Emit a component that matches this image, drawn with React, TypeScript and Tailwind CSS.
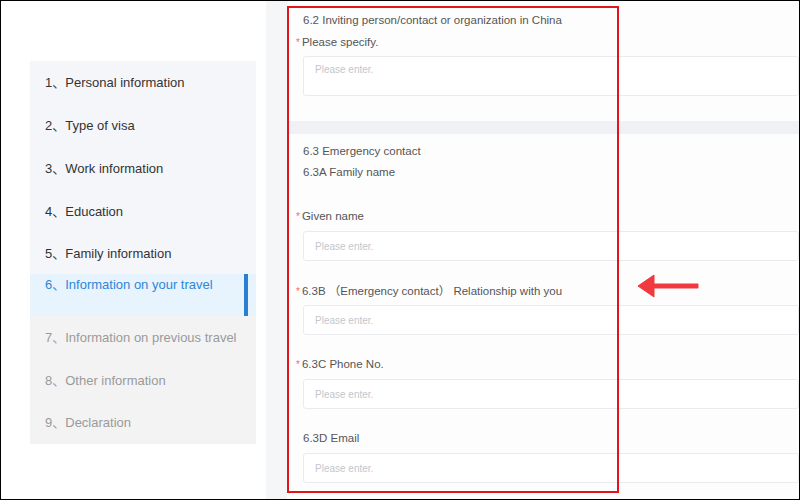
import React from "react"

const font = { fontFamily: '"Liberation Sans", "Noto Sans CJK SC", sans-serif' }

const steps = [
    { label: "Personal information", state: "done", h: "h-[43px]" },
    { label: "Type of visa", state: "done", h: "h-[43px]" },
    { label: "Work information", state: "done", h: "h-[43px]" },
    { label: "Education", state: "done", h: "h-[43px]" },
    { label: "Family information", state: "done", h: "h-[41px]" },
    { label: "Information on your travel", state: "active", h: "h-[42px]" },
    { label: "Information on previous travel", state: "todo", h: "h-[43px]" },
    { label: "Other information", state: "todo", h: "h-[43px]" },
    { label: "Declaration", state: "todo", h: "h-[42px]" },
]

const Label = ({ text, required, className = "" }: { text: string; required?: boolean; className?: string }) => (
    <div className={`h-[18px] leading-[18px] text-[11.5px] text-[#555] whitespace-nowrap ${className}`}>
        {required && <span className="-ml-[7px] mr-[2px] text-[#f56c6c] text-[10px]">*</span>}
        {text}
    </div>
)

const Input = ({ className = "" }: { className?: string }) => (
    <div className={`h-[30px] w-full rounded-[3px] border border-[#e9ebef] bg-white pl-[11px] flex items-center text-[10px] text-[#c3c6cd] ${className}`}>
        Please enter.
    </div>
)

export default function App() {
    return (
        <div className="relative w-[800px] h-[500px] border border-black overflow-hidden flex bg-white" style={font}>
            {/* left column with steps */}
            <div className="w-[265px] shrink-0 bg-white pt-[60px] pl-[29px]">
                <div className="w-[226px] bg-[#f5f6f9] flex flex-col text-[13px]">
                    {steps.map((s, i) => {
                        if (s.state === "active") {
                            return (
                                <div key={s.label} className={`${s.h} flex bg-[#e7f3fd]`}>
                                    <div className="flex-1 pl-[15px] pt-[1px] leading-[20px] text-[#2f86d6]">
                                        {i + 1}、{s.label}
                                    </div>
                                    <div className="w-[4px] mr-[8px] bg-[#2b7fd2]" />
                                </div>
                            )
                        }
                        return (
                            <div
                                key={s.label}
                                className={`${s.h} flex items-center pl-[15px] ${
                                    s.state === "done" ? "text-[#333]" : "text-[#9a9a9a] bg-[#f3f3f4]"
                                }`}
                            >
                                {i + 1}、{s.label}
                            </div>
                        )
                    })}
                </div>
            </div>

            {/* gutter */}
            <div className="w-[21px] shrink-0 bg-[#f5f6f8]" />

            {/* form */}
            <div className="flex-1 flex flex-col bg-[#fdfdfe]">
                <div className="h-[120px] pl-[16px] pt-[10px]">
                    <Label text="6.2 Inviting person/contact or organization in China" />
                    <Label text="Please specify." required className="mt-[4px]" />
                    <div className="mt-[5px] h-[40px] w-full rounded-[3px] border border-[#e9ebef] bg-white pl-[11px] pt-[5px] text-[10px] text-[#c3c6cd]">
                        Please enter.
                    </div>
                </div>
                <div className="h-[13px] bg-[#f0f1f4]" />
                <div className="flex-1 pl-[16px] pt-[8px]">
                    <Label text="6.3 Emergency contact" />
                    <Label text="6.3A Family name" className="mt-[3px]" />
                    <Label text="Given name" required className="mt-[26px]" />
                    <Input className="mt-[6px]" />
                    <Label text="6.3B （Emergency contact） Relationship with you" required className="mt-[21px]" />
                    <Input className="mt-[5px]" />
                    <Label text="6.3C Phone No." required className="mt-[20px]" />
                    <Input className="mt-[6px]" />
                    <Label text="6.3D Email" className="mt-[20px]" />
                    <Input className="mt-[6px]" />
                </div>
            </div>

            {/* annotation: highlight box */}
            <div className="absolute left-[286px] top-[5px] w-[332px] h-[487px] border-2 border-[#e3151c] pointer-events-none" />

            {/* annotation: arrow */}
            <svg className="absolute left-[636px] top-[273px]" width="64" height="26" viewBox="0 0 64 26">
                <path d="M1 12 L17 1 L17 10 L61 10 L61 14 L17 14 L17 23 Z" fill="#f03a3f" strokeLinejoin="round" stroke="#f03a3f" strokeWidth="1" />
            </svg>
        </div>
    )
}
